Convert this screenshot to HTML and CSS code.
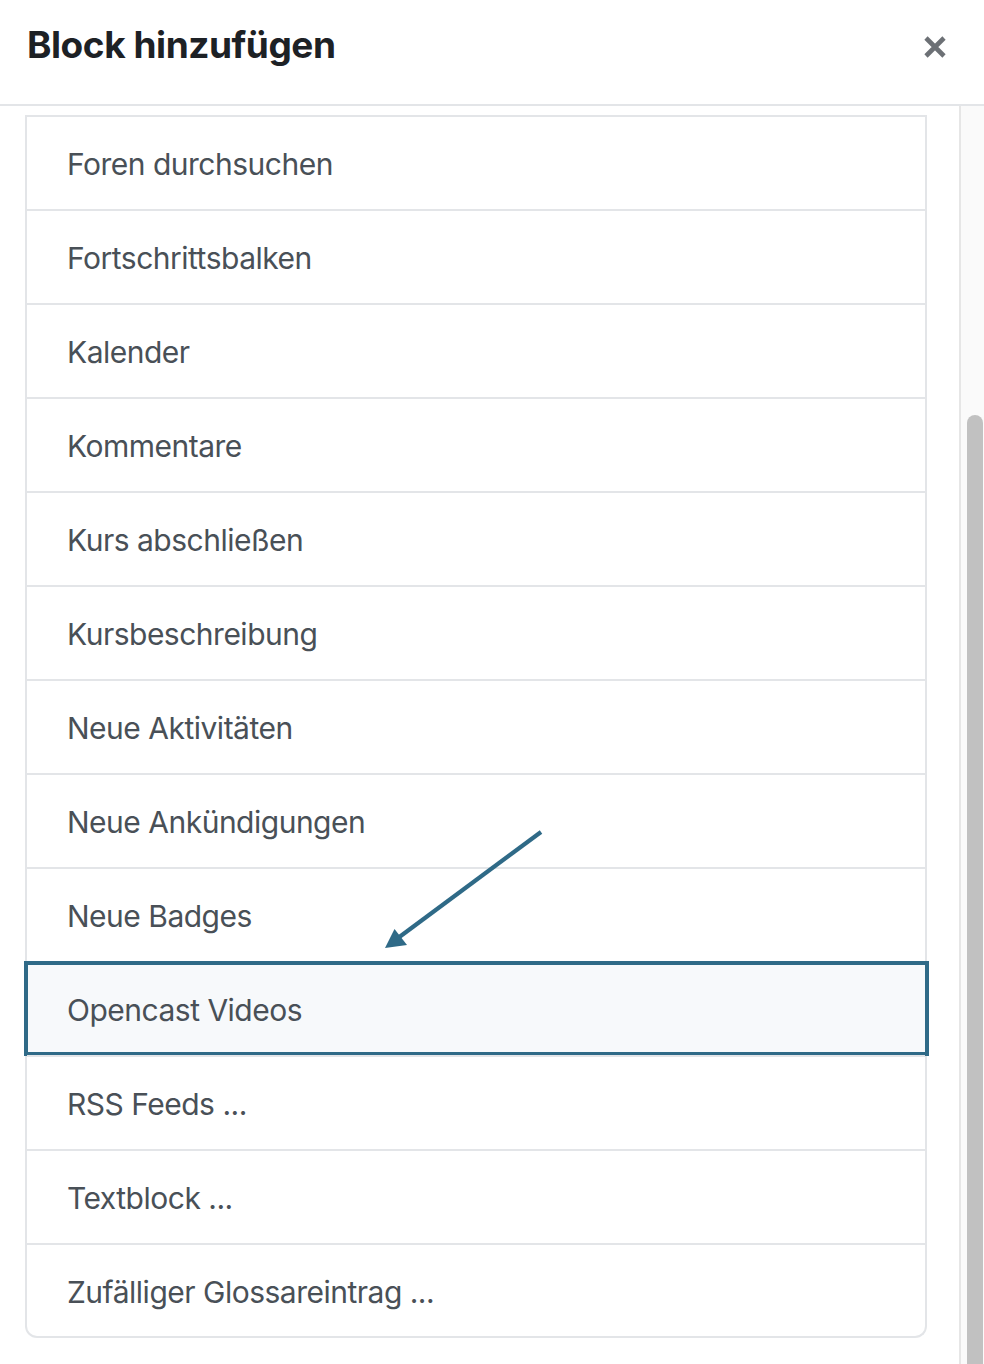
FILE: index.html
```html
<!DOCTYPE html>
<html lang="de">
<head>
<meta charset="utf-8">
<title>Block hinzufügen</title>
<link rel="stylesheet" href="styles.css">
</head>
<body>
<div class="modal">
  <header class="modal-header">
    <h5 class="modal-title">Block hinzufügen</h5>
    <button class="close" aria-label="Schließen">
      <svg width="24" height="24" viewBox="0 0 24 24"><path d="M3 3 L21 21 M21 3 L3 21" stroke="#6c7075" stroke-width="4.6" fill="none"/></svg>
    </button>
  </header>
  <div class="modal-body">
    <div class="scroller">
      <div class="list-group">
        <a class="item">Foren durchsuchen</a>
        <a class="item">Fortschrittsbalken</a>
        <a class="item">Kalender</a>
        <a class="item">Kommentare</a>
        <a class="item">Kurs abschließen</a>
        <a class="item">Kursbeschreibung</a>
        <a class="item">Neue Aktivitäten</a>
        <a class="item">Neue Ankündigungen</a>
        <a class="item">Neue Badges</a>
        <a class="item active">Opencast Videos</a>
        <a class="item">RSS Feeds ...</a>
        <a class="item">Textblock ...</a>
        <a class="item">Zufälliger Glossareintrag ...</a>
      </div>
    </div>
    <div class="scrollbar"><div class="thumb"></div></div>
  </div>
</div>
<svg class="annotation" width="984" height="1364" viewBox="0 0 984 1364">
  <line x1="541" y1="832" x2="398" y2="938" stroke="#2f6a87" stroke-width="4.2"/>
  <polygon points="385,948 394.5,929 407,945" fill="#2f6a87"/>
</svg>
</body>
</html>
```
FILE: styles.css
```css
html, body {
  margin: 0;
  padding: 0;
  background: #ffffff;
}
body {
  font-family: Inter, "Noto Sans", "Liberation Sans", sans-serif;
  position: relative;
}
.modal {
  display: flex;
  flex-direction: column;
  height: 100vh;
  width: 984px;
  overflow: hidden;
}
.modal-header {
  flex: 0 0 auto;
  height: 104px;
  box-sizing: content-box;
  border-bottom: 2px solid #e3e5e8;
  display: flex;
  justify-content: space-between;
  align-items: flex-start;
  padding: 0 37px 0 27px;
}
.modal-title {
  margin: 22px 0 0 0;
  font-size: 37px;
  line-height: 45px;
  font-weight: 700;
  color: #1d2125;
  letter-spacing: -0.45px;
}
.close {
  margin-top: 35px;
  padding: 0;
  border: 0;
  background: none;
  width: 24px;
  height: 24px;
  display: block;
}
.close svg { display: block; }
.modal-body {
  flex: 1 1 auto;
  display: flex;
  flex-direction: row;
  min-height: 0;
}
.scroller {
  flex: 1 1 auto;
  padding: 9px 32px 0 25px;
  overflow: hidden;
}
.scrollbar {
  flex: 0 0 23px;
  background: #fafafa;
  border-left: 2px solid #e6e6e6;
}
.thumb {
  margin: 309px 0 0 6px;
  width: 16px;
  height: 960px;
  border-radius: 8px;
  background: #c1c1c1;
}
.list-group {
  border: 2px solid #e3e5e8;
  border-top: 0;
  border-radius: 0 0 12px 12px;
  display: flex;
  flex-direction: column;
}
.item {
  display: block;
  position: relative;
  height: 90px;
  box-sizing: content-box;
  padding: 2px 40px 0 40px;
  border-top: 2px solid #e3e5e8;
  font-size: 30px;
  line-height: 90px;
  letter-spacing: -0.5px;
  color: #495057;
  text-decoration: none;
}
.item:last-child {
  height: 89px;
}
.item.active {
  background: #f7f9fb;
}
.item.active::after {
  content: "";
  position: absolute;
  top: -2px;
  bottom: -1px;
  left: -3px;
  right: -4px;
  border: 4px solid #2f6a87;
}
.annotation {
  position: absolute;
  top: 0;
  left: 0;
  pointer-events: none;
}
```
